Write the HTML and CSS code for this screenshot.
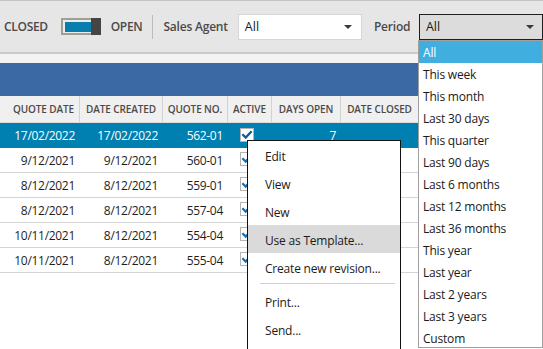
FILE: index.html
```html
<!DOCTYPE html>
<html lang="en">
<head>
    <meta charset="UTF-8">
    <meta name="viewport" content="width=device-width, initial-scale=1.0">
    <title>Quotes</title>
    <link rel="stylesheet" href="styles.css">
</head>
<body>
    <div class="toolbar">
        <span class="label closed">CLOSED</span>
        <div class="toggle">
            <div class="track"><div class="fill"></div></div>
            <div class="knob"></div>
        </div>
        <span class="label open">OPEN</span>
        <div class="sep"></div>
        <span class="label agent">Sales Agent</span>
        <div class="combo agent-combo">
            <span>All</span>
            <span class="arrow"></span>
        </div>
        <span class="label period">Period</span>
        <div class="combo period-combo">
            <span>All</span>
            <span class="arrow"></span>
        </div>
    </div>
    <div class="strip"></div>
    <div class="band"></div>

    <div class="grid">
        <div class="row head">
            <div class="cell first">QUOTE DATE</div>
            <div class="cell">DATE CREATED</div>
            <div class="cell">QUOTE NO.</div>
            <div class="cell">ACTIVE</div>
            <div class="cell">DAYS OPEN</div>
            <div class="cell">DATE CLOSED</div>
        </div>
        <div class="row selected">
            <div class="cell">17/02/2022</div>
            <div class="cell">17/02/2022</div>
            <div class="cell">562-01</div>
            <div class="cell check"><span class="box"><svg viewBox="0 0 14 14"><polyline points="2.5,7 5.5,10 11.5,3.5"/></svg></span></div>
            <div class="cell">7</div>
            <div class="cell"></div>
        </div>
        <div class="row">
            <div class="cell">9/12/2021</div>
            <div class="cell">9/12/2021</div>
            <div class="cell">560-01</div>
            <div class="cell check"><span class="box"><svg viewBox="0 0 14 14"><polyline points="2.5,7 5.5,10 11.5,3.5"/></svg></span></div>
            <div class="cell"></div>
            <div class="cell"></div>
        </div>
        <div class="row">
            <div class="cell">8/12/2021</div>
            <div class="cell">8/12/2021</div>
            <div class="cell">559-01</div>
            <div class="cell check"><span class="box"><svg viewBox="0 0 14 14"><polyline points="2.5,7 5.5,10 11.5,3.5"/></svg></span></div>
            <div class="cell"></div>
            <div class="cell"></div>
        </div>
        <div class="row">
            <div class="cell">8/12/2021</div>
            <div class="cell">8/12/2021</div>
            <div class="cell">557-04</div>
            <div class="cell check"><span class="box"><svg viewBox="0 0 14 14"><polyline points="2.5,7 5.5,10 11.5,3.5"/></svg></span></div>
            <div class="cell"></div>
            <div class="cell"></div>
        </div>
        <div class="row">
            <div class="cell">10/11/2021</div>
            <div class="cell">8/12/2021</div>
            <div class="cell">554-04</div>
            <div class="cell check"><span class="box"><svg viewBox="0 0 14 14"><polyline points="2.5,7 5.5,10 11.5,3.5"/></svg></span></div>
            <div class="cell"></div>
            <div class="cell"></div>
        </div>
        <div class="row">
            <div class="cell">10/11/2021</div>
            <div class="cell">8/12/2021</div>
            <div class="cell">555-04</div>
            <div class="cell check"><span class="box"><svg viewBox="0 0 14 14"><polyline points="2.5,7 5.5,10 11.5,3.5"/></svg></span></div>
            <div class="cell"></div>
            <div class="cell"></div>
        </div>
    </div>

    <!-- Context menu -->
    <div class="menu">
        <div class="item">Edit</div>
        <div class="item">View</div>
        <div class="item">New</div>
        <div class="item hover">Use as Template...</div>
        <div class="item">Create new revision...</div>
        <div class="divider"></div>
        <div class="item">Print...</div>
        <div class="item">Send...</div>
    </div>

    <!-- Period dropdown list -->
    <div class="list">
        <div class="opt active">All</div>
        <div class="opt">This week</div>
        <div class="opt">This month</div>
        <div class="opt">Last 30 days</div>
        <div class="opt">This quarter</div>
        <div class="opt">Last 90 days</div>
        <div class="opt">Last 6 months</div>
        <div class="opt">Last 12 months</div>
        <div class="opt">Last 36 months</div>
        <div class="opt">This year</div>
        <div class="opt">Last year</div>
        <div class="opt">Last 2 years</div>
        <div class="opt">Last 3 years</div>
        <div class="opt">Custom</div>
    </div>
</body>
</html>
```

FILE: styles.css
```css
body {
    margin: 0;
    padding: 0;
    width: 543px;
    height: 349px;
    overflow: hidden;
    position: relative;
    background-color: #fff;
    font-family: 'Open Sans', 'Noto Sans', sans-serif;
    color: #1e1e1e;
}

/* Toolbar */
.toolbar {
    height: 51px;
    display: flex;
    align-items: center;
    background-color: #e6e6e6;
    border-top: 1px solid #c4c4c4;
    border-bottom: 2px solid #cacaca;
    padding-left: 4px;
}

.label {
    font-size: 12px;
    font-weight: 600;
    color: #4a4a4a;
    white-space: nowrap;
}

.closed { width: 42px; margin-right: 15px; letter-spacing: -0.3px; }
.open { width: 32px; margin-left: 10px; letter-spacing: -0.3px; }
.agent { width: 65px; margin-left: 10px; letter-spacing: -0.2px; }
.period { width: 34px; margin-left: 12px; letter-spacing: -0.2px; }

.toggle {
    display: flex;
    width: 40px;
    height: 17px;
}

.track {
    flex: 1;
    border: 2px solid #a39e95;
    border-right: none;
    padding: 2px 0 1px 2px;
    background-color: #ececec;
}

.fill {
    height: 100%;
    background-color: #0a7daf;
}

.knob {
    width: 10px;
    background-color: #454545;
}

.sep {
    width: 1px;
    height: 24px;
    background-color: #bcbcbc;
    margin-left: 10px;
}

.combo {
    box-sizing: border-box;
    display: flex;
    align-items: center;
    justify-content: space-between;
    padding: 0 9px 0 6px;
    font-size: 12.5px;
    color: #1a1a1a;
}

.agent-combo {
    width: 125px;
    height: 26px;
    margin-left: 10px;
    background-color: #fff;
    border: 1px solid #d6d6d6;
}

.period-combo {
    width: 125px;
    height: 26px;
    margin-left: 11px;
    background-color: #dcdcdc;
    border: 1px solid #1f1f1f;
    padding-right: 8px;
}

.arrow {
    width: 0;
    height: 0;
    border-left: 4px solid transparent;
    border-right: 4px solid transparent;
    border-top: 4px solid #3a3a3a;
}

.strip {
    height: 9px;
    background-color: #f3f3f3;
}

.band {
    height: 33px;
    width: 419px;
    background-color: #3a69a3;
}

/* Grid */
.grid {
    width: 419px;
}

.row {
    display: grid;
    grid-template-columns: 80px 83px 65px 44px 69px 78px;
    height: 25px;
    border-bottom: 1px solid #d4d4d4;
    box-sizing: border-box;
    font-size: 12px;
    color: #1e1e1e;
}

.row .cell {
    display: flex;
    align-items: center;
    justify-content: flex-end;
    padding-right: 5px;
    white-space: nowrap;
    letter-spacing: -0.3px;
}

.row.head {
    height: 27px;
    background-color: #f0f0f0;
    border-bottom: 1px solid #dcdcdc;
    font-size: 10px;
    font-weight: 600;
    color: #4e4a46;
}

.row.head .cell {
    justify-content: center;
    padding: 0;
    border-right: 1px solid #d2d2d2;
    letter-spacing: -0.1px;
}

.row.head .cell.first {
    padding-left: 8px;
}

.row.selected {
    height: 25px;
    background-color: #0080b0;
    color: #fff;
    border-bottom: none;
}

.row .cell.check {
    justify-content: center;
    padding: 0;
}

.box {
    width: 14px;
    height: 14px;
    box-sizing: border-box;
    border: 1px solid #b4b4b4;
    background-color: #fff;
    display: flex;
    margin-left: -7px;
    margin-top: -2px;
}

.box svg {
    width: 12px;
    height: 12px;
    fill: none;
    stroke: #1a6fb0;
    stroke-width: 2.6;
    stroke-linecap: square;
}

.selected .box svg {
    stroke: #0b5c98;
}

/* Context menu */
.menu {
    position: absolute;
    left: 247px;
    top: 140px;
    width: 152px;
    background-color: #fff;
    border: 1px solid #111;
    padding-bottom: 20px;
    font-size: 12px;
    color: #1e1a18;
}

.item {
    height: 28px;
    line-height: 31px;
    padding-left: 17px;
    white-space: nowrap;
    letter-spacing: -0.2px;
}

.item.hover {
    background-color: #dadada;
}

.divider {
    height: 1px;
    background-color: #cfcfcf;
    margin: 2px 5px 3px 12px;
}

/* Dropdown list */
.list {
    position: absolute;
    left: 418px;
    top: 40px;
    width: 123px;
    height: 306px;
    overflow: hidden;
    background-color: #fff;
    border: 1px solid #a0a0a0;
    font-size: 12px;
    color: #1a1a1a;
}

.opt {
    height: 22px;
    line-height: 23px;
    padding-left: 4px;
    white-space: nowrap;
    letter-spacing: -0.2px;
}

.opt.active {
    background-color: #40afe0;
    color: #fff;
}
```
